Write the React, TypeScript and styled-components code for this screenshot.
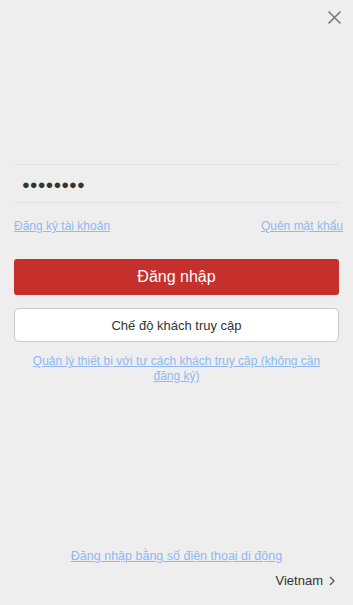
import React from "react";
import styled, { createGlobalStyle } from "styled-components";

const GlobalStyle = createGlobalStyle`
  html, body {
    margin: 0;
    padding: 0;
    background: #eeeeee;
  }
  body {
    font-family: "Liberation Sans", Arial, sans-serif;
  }
`;

const Screen = styled.div`
  width: 353px;
  height: 605px;
  box-sizing: border-box;
  background: #eeeeee;
  display: flex;
  flex-direction: column;
  padding: 0 14px;
`;

const TopBar = styled.div`
  display: flex;
  justify-content: flex-end;
  padding-top: 10px;
  margin-right: -3px;
  height: 164px;
  box-sizing: border-box;
`;

const CloseButton = styled.button`
  border: none;
  background: none;
  padding: 0;
  width: 15px;
  height: 15px;
  display: flex;
  cursor: pointer;
`;

const Field = styled.div`
  border-top: 1px solid #e2e2e2;
  border-bottom: 1px solid #e2e2e2;
  height: 37px;
  display: flex;
  align-items: center;
  padding-left: 8px;
`;

const Dots = styled.span`
  font-size: 13px;
  color: #333;
  line-height: 1;
  padding-top: 2px;
`;

const LinkRow = styled.div`
  display: flex;
  justify-content: space-between;
  margin-top: 16px;
  margin-right: -4px;
`;

const TextLink = styled.a<{ $size?: number }>`
  color: #8eb8f2;
  font-size: ${(p) => p.$size ?? 12}px;
  text-decoration: underline;
  cursor: pointer;
  line-height: 14px;
`;

const PrimaryButton = styled.button`
  margin-top: 26px;
  height: 36px;
  border: none;
  border-radius: 3px;
  background: #c6302c;
  color: #fff;
  font-family: "Liberation Sans", Arial, sans-serif;
  font-size: 16px;
  cursor: pointer;
`;

const GuestButton = styled.button`
  margin-top: 13px;
  height: 34px;
  border: 1px solid #c9c9c9;
  border-radius: 5px;
  background: #fff;
  color: #333;
  font-family: "Liberation Sans", Arial, sans-serif;
  font-size: 13px;
  cursor: pointer;
`;

const GuestNote = styled.div`
  margin-top: 11px;
  padding: 0 12px;
  text-align: center;
  line-height: 14px;
`;

const Spacer = styled.div`
  flex: 1;
`;

const Bottom = styled.div`
  display: flex;
  flex-direction: column;
  align-items: center;
  padding-bottom: 17px;
`;

const Region = styled.div`
  align-self: flex-end;
  margin-top: 10px;
  margin-right: 4px;
  display: flex;
  align-items: center;
  gap: 6px;
  font-size: 13px;
  color: #333;
`;

const CloseIcon = () => (
  <svg width="15" height="15" viewBox="0 0 15 15">
    <path d="M1.5 1.5 L13.5 13.5 M13.5 1.5 L1.5 13.5" stroke="#7a7a7a" strokeWidth="1.6" fill="none" />
  </svg>
);

const Chevron = () => (
  <svg width="6" height="10" viewBox="0 0 6 10">
    <path d="M1 1 L5 5 L1 9" stroke="#555" strokeWidth="1.3" fill="none" />
  </svg>
);

export default function App() {
  return (
    <>
      <GlobalStyle />
      <Screen>
        <TopBar>
          <CloseButton aria-label="close">
            <CloseIcon />
          </CloseButton>
        </TopBar>
        <Field>
          <Dots>●●●●●●●●</Dots>
        </Field>
        <LinkRow>
          <TextLink>Đăng ký tài khoản</TextLink>
          <TextLink>Quên mật khẩu</TextLink>
        </LinkRow>
        <PrimaryButton>Đăng nhập</PrimaryButton>
        <GuestButton>Chế độ khách truy cập</GuestButton>
        <GuestNote>
          <TextLink>Quản lý thiết bị với tư cách khách truy cập (không cần đăng ký)</TextLink>
        </GuestNote>
        <Spacer />
        <Bottom>
          <TextLink $size={12.5}>Đăng nhập bằng số điện thoại di động</TextLink>
          <Region>
            Vietnam <Chevron />
          </Region>
        </Bottom>
      </Screen>
    </>
  );
}
